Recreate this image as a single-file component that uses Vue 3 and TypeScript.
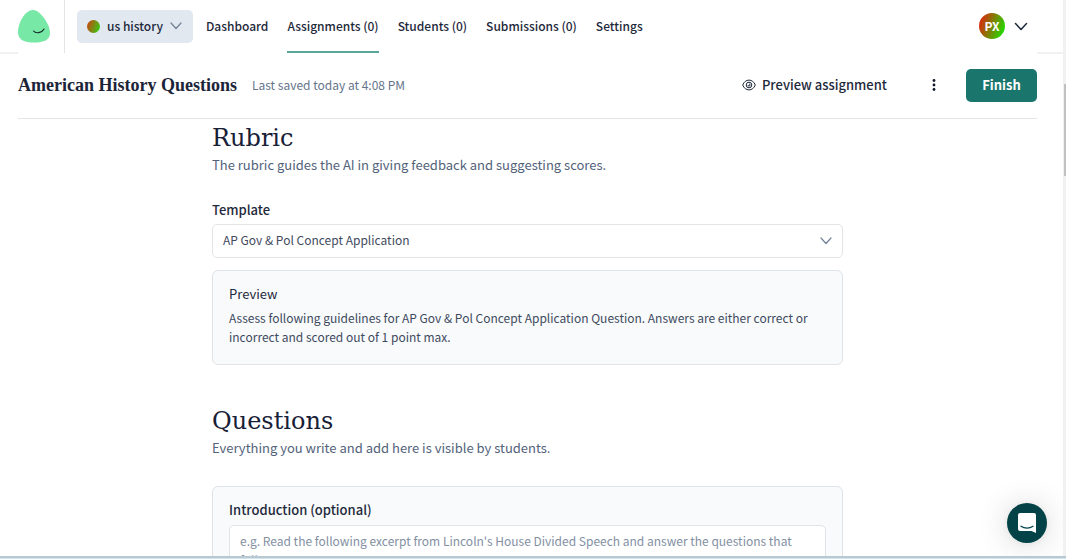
<script setup lang="ts">
import { ref } from 'vue'

interface NavItem {
  label: string
  active?: boolean
}

const navItems: NavItem[] = [
  { label: 'Dashboard' },
  { label: 'Assignments (0)', active: true },
  { label: 'Students (0)' },
  { label: 'Submissions (0)' },
  { label: 'Settings' },
]

const templates: string[] = ['AP Gov & Pol Concept Application']
const template = ref<string>(templates[0])
const introduction = ref<string>('')
</script>

<template>
  <div class="page">
    <header class="topbar">
      <a class="logo" href="#" aria-label="Home">
        <svg width="32" height="33" viewBox="0 0 32 33">
          <path d="M15 0C22 0 32 14 32 23C32 30 26 32.500 16 32.500C6 32.500 0 30 0 22C0 13 7 0 15 0Z" fill="#77e8a5" />
          <path d="M15.500 21C17.500 23.500 23.500 23.500 26 19" fill="none" stroke="#12312c" stroke-width="1.100" stroke-linecap="round" />
        </svg>
      </a>
      <div class="topnav">
        <button class="workspace" type="button">
          <span class="dot"></span>
          <span>us history</span>
          <svg width="12" height="8" viewBox="0 0 12 8"><path d="M1 1L6 6.500L11 1" /></svg>
        </button>
        <nav class="links">
          <a v-for="item in navItems" :key="item.label" href="#" :class="{ active: item.active }">{{ item.label }}</a>
        </nav>
        <button class="account" type="button" aria-label="Account menu">
          <span class="avatar">PX</span>
          <svg width="14" height="9" viewBox="0 0 14 9"><path d="M1.500 1.500L7 7.500L12.500 1.500" /></svg>
        </button>
      </div>
    </header>

    <section class="subbar">
      <h1>American History Questions</h1>
      <span class="saved">Last saved today at 4:08 PM</span>
      <button class="preview-button" type="button">
        <svg width="14" height="12" viewBox="0 0 14 12" fill="none" stroke="#1e293b" stroke-width="1">
          <path d="M0.700 6C2 2.800 4.300 1.100 7 1.100S12 2.800 13.300 6C12 9.200 9.700 10.900 7 10.900S2 9.200 0.700 6Z" />
          <circle cx="7" cy="6" r="2.800" />
          <path d="M5.900 6A1.100 1.100 0 1 0 7 4.900" />
        </svg>
        <span>Preview assignment</span>
      </button>
      <button class="more" type="button" aria-label="More actions">
        <svg width="4" height="12" viewBox="0 0 4 12" fill="#0f172a">
          <circle cx="2" cy="1.500" r="1.400" /><circle cx="2" cy="6" r="1.400" /><circle cx="2" cy="10.500" r="1.400" />
        </svg>
      </button>
      <button class="finish" type="button">Finish</button>
    </section>

    <main class="content">
      <section class="rubric">
        <h2>Rubric</h2>
        <p class="lead">The rubric guides the AI in giving feedback and suggesting scores.</p>
        <label class="label" for="template">Template</label>
        <div class="select-wrap">
          <select id="template" v-model="template">
            <option v-for="name in templates" :key="name" :value="name">{{ name }}</option>
          </select>
          <svg width="12" height="8" viewBox="0 0 12 8"><path d="M1 1L6 6.500L11 1" /></svg>
        </div>
        <div class="card preview-card">
          <h3>Preview</h3>
          <p>
            Assess following guidelines for AP Gov &amp; Pol Concept Application Question. Answers are either correct or
            incorrect and scored out of 1 point max.
          </p>
        </div>
      </section>

      <section>
        <h2>Questions</h2>
        <p class="lead">Everything you write and add here is visible by students.</p>
        <div class="card intro-card">
          <label class="label" for="introduction">Introduction (optional)</label>
          <textarea
            id="introduction"
            v-model="introduction"
            rows="3"
            placeholder="e.g. Read the following excerpt from Lincoln's House Divided Speech and answer the questions that follow."
          ></textarea>
        </div>
      </section>
    </main>

    <button class="chat" type="button" aria-label="Open chat">
      <svg width="18" height="20" viewBox="0 0 18 20">
        <path d="M2 0H16Q18 0 18 2V20L13.500 18H2Q0 18 0 16V2Q0 0 2 0Z" fill="#fff" />
        <path d="M3 13.200C6.500 15.800 11.500 15.800 15 13.200" fill="none" stroke="#034347" stroke-width="1.200" stroke-linecap="round" />
      </svg>
    </button>
    <div class="scroll-track"><div class="scroll-thumb"></div></div>
    <div class="bottom-edge"></div>
  </div>
</template>

<style>
body {
  margin: 0;
  overflow: hidden;
}
</style>

<style scoped>
* {
  box-sizing: border-box;
}

.page {
  position: relative;
  height: 100vh;
  overflow: hidden;
  background: #fff;
  color: #1e293b;
  font-family: 'Noto Sans CJK SC', 'Noto Sans', sans-serif;
  font-size: 12px;
  line-height: 20px;
}

h1,
h2,
h3,
p {
  margin: 0;
}

button {
  display: flex;
  align-items: center;
  padding: 0;
  border: 0;
  background: none;
  color: inherit;
  font: inherit;
  cursor: pointer;
}

a {
  color: inherit;
  text-decoration: none;
}

svg {
  display: block;
  flex: none;
}

.topbar {
  display: flex;
  height: 54px;
  padding: 0 29px 0 18px;
  background: linear-gradient(#f1f1f2, #f1f1f2) left bottom / 18px 2px no-repeat,
    linear-gradient(#f1f1f2, #f1f1f2) right bottom / 29px 2px no-repeat;
}

.logo {
  height: 53px;
  width: 47px;
  padding-top: 10px;
  border-right: 1px solid #e2e4e8;
}

.topnav {
  display: flex;
  flex: 1;
  align-items: center;
  height: 52px;
  padding-left: 12px;
  font-weight: 500;
}

.workspace {
  gap: 7px;
  height: 33px;
  padding: 0 11px 0 10px;
  border-radius: 5px;
  background: #e2e8f0;
}

.dot {
  width: 13px;
  height: 13px;
  border-radius: 50%;
  background: linear-gradient(110deg, #d33a12, #27d914);
}

.workspace svg,
.select-wrap svg,
.account svg {
  fill: none;
  stroke: #718096;
  stroke-width: 1.2px;
  stroke-linecap: round;
  stroke-linejoin: round;
}

.links {
  display: flex;
  align-self: flex-start;
  gap: 19px;
  margin-left: 13px;
}

.links a {
  height: 53px;
  border-bottom: 2px solid transparent;
  line-height: 51px;
}

.links a.active {
  border-color: #5aa59c;
}

.account {
  gap: 9px;
  margin-left: auto;
  padding-right: 9px;
}

.account svg {
  stroke: #1e293b;
  stroke-width: 1.5px;
}

.avatar {
  width: 26px;
  height: 26px;
  border-radius: 50%;
  background: linear-gradient(110deg, #d82a0c 10%, #20dd00 90%);
  color: #fff;
  font-weight: 700;
  line-height: 25px;
  text-align: center;
}

.subbar {
  display: flex;
  align-items: center;
  height: 65px;
  margin: 0 29px 0 18px;
  padding-bottom: 2px;
  border-bottom: 1px solid #e4e5e7;
}

h1 {
  color: #1b2438;
  font-family: 'Liberation Serif', serif;
  font-size: 18px;
  line-height: 24px;
}

.saved {
  margin-left: 15px;
  padding-bottom: 1px;
  color: #64748b;
}

.preview-button {
  gap: 6px;
  margin-left: auto;
  font-size: 13px;
  font-weight: 500;
}

.preview-button span,
.workspace span:nth-child(2) {
  padding-bottom: 1px;
}

.more {
  justify-content: center;
  width: 32px;
  height: 32px;
  margin: 0 16px 0 31px;
}

.finish {
  justify-content: center;
  width: 71px;
  height: 33px;
  padding-bottom: 1px;
  border-radius: 5px;
  background: #1a766d;
  color: #fff;
  font-size: 13px;
  font-weight: 700;
}

.content {
  padding: 0 29px 0 18px;
}

.content > section {
  max-width: 631px;
  margin: 0 auto;
}

.content > .rubric {
  margin-bottom: 37px;
}

h2 {
  padding-top: 4px;
  color: #172036;
  font-family: 'DejaVu Serif', serif;
  font-size: 24px;
  font-weight: 400;
  line-height: 31px;
}

.lead {
  color: #52627a;
  font-size: 13px;
  line-height: 22px;
}

.label,
h3 {
  display: block;
  color: #1e293b;
  font-size: 13px;
  font-weight: 500;
  line-height: 22px;
}

h3 {
  font-weight: 400;
}

.rubric .label {
  margin-top: 23px;
  margin-bottom: 3px;
}

.select-wrap {
  display: grid;
  align-items: center;
}

.select-wrap > * {
  grid-area: 1 / 1;
}

.select-wrap svg {
  justify-self: end;
  margin-right: 11px;
  pointer-events: none;
}

select {
  width: 100%;
  height: 34px;
  padding: 0 10px 2px;
  border: 1px solid #e3e5e8;
  border-radius: 5px;
  background: #fff;
  color: #3f4a5e;
  font: inherit;
  appearance: none;
}

.card {
  padding: 12px 16px;
  border: 1px solid #e0e3e7;
  border-radius: 6px;
  background: #f8fafc;
}

.preview-card {
  margin-top: 12px;
  padding-bottom: 18px;
}

.preview-card p {
  margin-top: 3px;
  color: #3f4a5e;
  line-height: 19px;
}

.intro-card {
  margin-top: 27px;
}

textarea {
  display: block;
  width: 100%;
  margin-top: 4px;
  padding: 5px 10px;
  border: 1px solid #e0e3e7;
  border-radius: 5px;
  background: #fff;
  color: #3f4a5e;
  font: inherit;
  line-height: 19px;
  resize: none;
}

textarea::placeholder {
  color: #8390a3;
}

.chat {
  position: absolute;
  right: 19px;
  bottom: 16px;
  justify-content: center;
  width: 40px;
  height: 40px;
  border-radius: 50%;
  background: #034347;
  box-shadow: 0 1px 6px rgba(0, 0, 0, 0.06), 0 2px 32px rgba(0, 0, 0, 0.16);
}

.scroll-track {
  position: absolute;
  top: 0;
  right: 0;
  bottom: 0;
  width: 3px;
  padding: 84px 0 0 1px;
  background: #f1f1f1;
}

.scroll-thumb {
  height: 92px;
  background: #c1c1c1;
}

.bottom-edge {
  position: absolute;
  right: 0;
  bottom: 0;
  left: 0;
  height: 3px;
  border-top: 2px solid #b9c9d0;
  background: #cfe6f2;
}
</style>
